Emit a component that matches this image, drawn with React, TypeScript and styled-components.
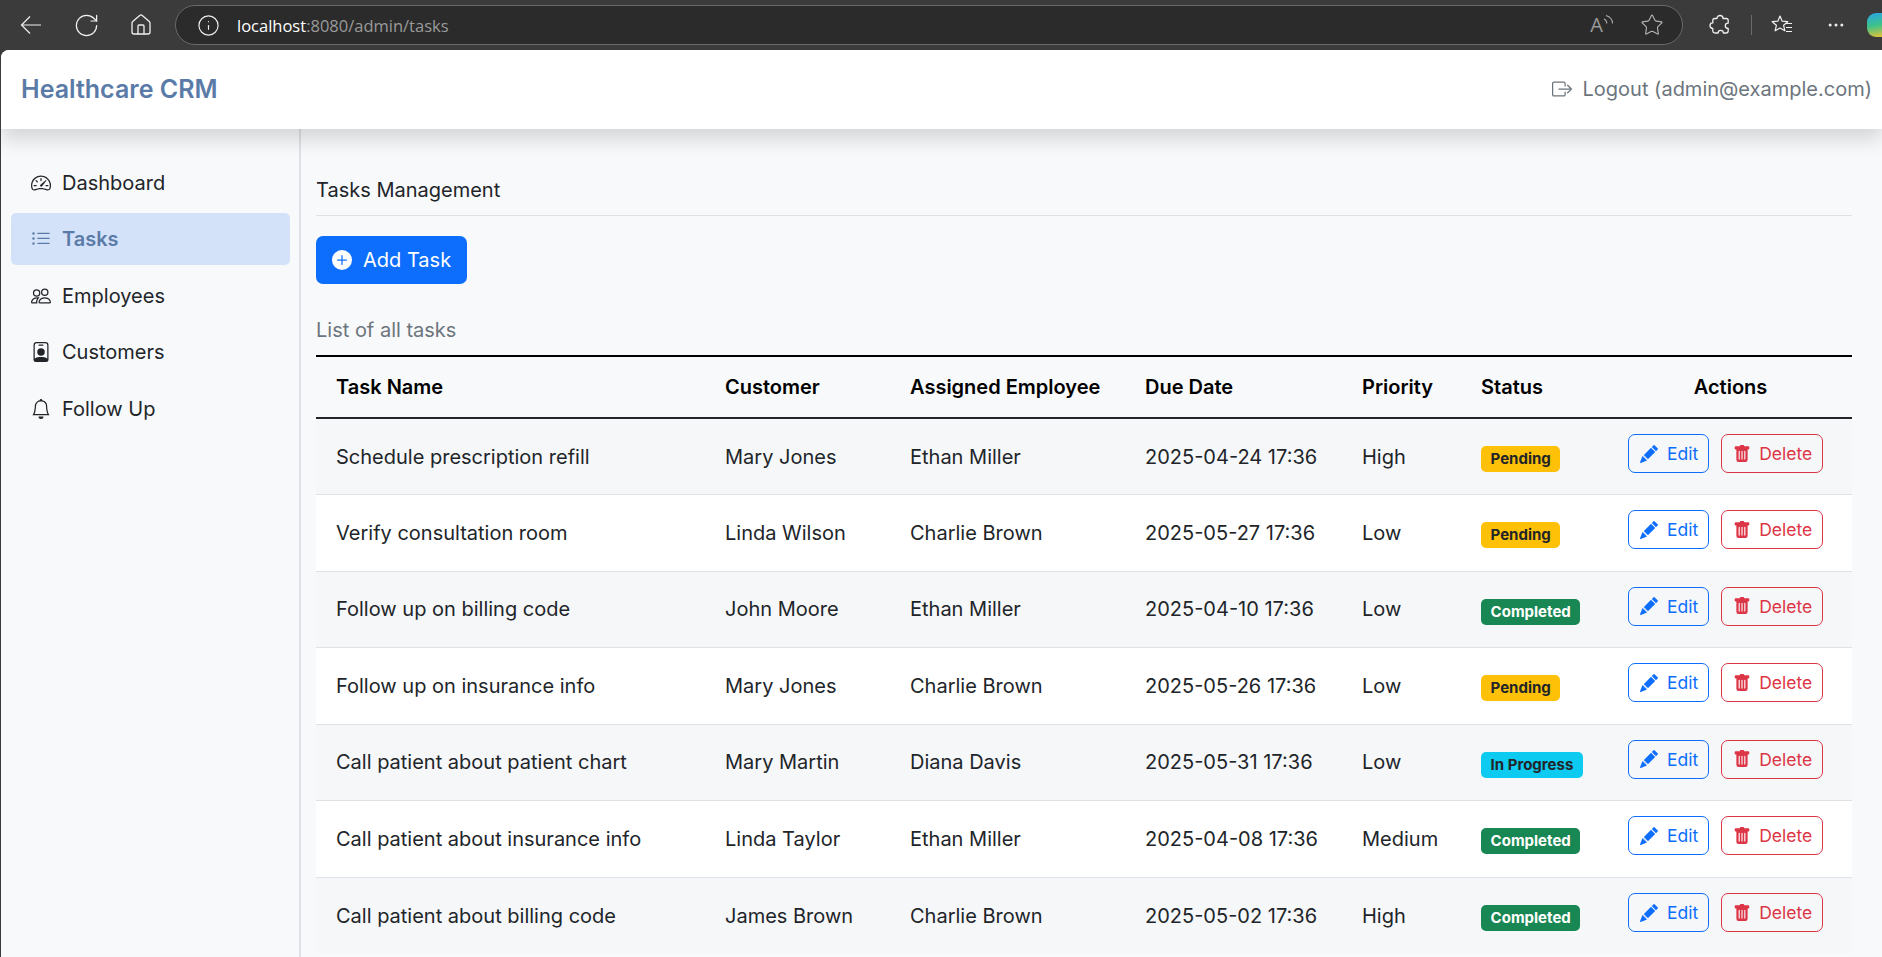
import styled, { createGlobalStyle } from 'styled-components';
import { RotateCw, House, Info, Star, MoreHorizontal } from 'lucide-react';
import {
  BsSpeedometer2,
  BsListUl,
  BsPeople,
  BsPersonBadge,
  BsBell,
  BsBoxArrowRight,
  BsPlusCircleFill,
  BsPencilFill,
  BsTrashFill,
} from 'react-icons/bs';

const navItems = [
  { label: 'Dashboard', icon: <BsSpeedometer2 /> },
  { label: 'Tasks', icon: <BsListUl />, active: true },
  { label: 'Employees', icon: <BsPeople /> },
  { label: 'Customers', icon: <BsPersonBadge /> },
  { label: 'Follow Up', icon: <BsBell /> },
];

type Status = 'Pending' | 'Completed' | 'In Progress';

const tasks: { name: string; customer: string; employee: string; due: string; priority: string; status: Status }[] = [
  { name: 'Schedule prescription refill', customer: 'Mary Jones', employee: 'Ethan Miller', due: '2025-04-24 17:36', priority: 'High', status: 'Pending' },
  { name: 'Verify consultation room', customer: 'Linda Wilson', employee: 'Charlie Brown', due: '2025-05-27 17:36', priority: 'Low', status: 'Pending' },
  { name: 'Follow up on billing code', customer: 'John Moore', employee: 'Ethan Miller', due: '2025-04-10 17:36', priority: 'Low', status: 'Completed' },
  { name: 'Follow up on insurance info', customer: 'Mary Jones', employee: 'Charlie Brown', due: '2025-05-26 17:36', priority: 'Low', status: 'Pending' },
  { name: 'Call patient about patient chart', customer: 'Mary Martin', employee: 'Diana Davis', due: '2025-05-31 17:36', priority: 'Low', status: 'In Progress' },
  { name: 'Call patient about insurance info', customer: 'Linda Taylor', employee: 'Ethan Miller', due: '2025-04-08 17:36', priority: 'Medium', status: 'Completed' },
  { name: 'Call patient about billing code', customer: 'James Brown', employee: 'Charlie Brown', due: '2025-05-02 17:36', priority: 'High', status: 'Completed' },
];

const columns = [
  { title: 'Task Name', width: 389 },
  { title: 'Customer', width: 185 },
  { title: 'Assigned Employee', width: 235 },
  { title: 'Due Date', width: 217 },
  { title: 'Priority', width: 119 },
  { title: 'Status', width: 148 },
  { title: 'Actions', width: 243, center: true },
];

function App() {
  return (
    <Page>
      <GlobalStyle />
      <BrowserBar>
        <ChromeButton>
          <svg width="22" height="20" viewBox="0 0 22 20" fill="none" stroke="currentColor" strokeWidth="1.2">
            <path d="M21 10H1.5M10 1.5 1.5 10l8.5 8.5" />
          </svg>
        </ChromeButton>
        <ChromeButton><RotateCw size={27} strokeWidth={1.1} /></ChromeButton>
        <ChromeButton><House size={24} strokeWidth={1.3} /></ChromeButton>
        <AddressBar>
          <Info size={23} strokeWidth={1.2} color="#f0f0f0" />
          <Url><b>localhost</b>:8080/admin/tasks</Url>
          <ReadAloud>
            A
            <svg width="12" height="14" viewBox="0 0 12 14" fill="none" stroke="#aaaaaa" strokeWidth="1.1">
              <path d="M1 5c1.8.8 2.800 2.400 2.800 4.500" />
              <path d="M3 1.500c4 1.200 6.500 4 6.500 8" />
            </svg>
          </ReadAloud>
          <Star size={24} strokeWidth={1.1} color="#b5b5b5" />
        </AddressBar>
        <ToolIcons>
          <svg width="22" height="22" viewBox="0 0 22 22" fill="none" stroke="#f0f0f0" strokeWidth="1.3" strokeLinejoin="round">
            <path d="M8 4.500C8 2.500 9.500 1.500 11 1.500c2 0 3 1.300 3 3h3.200c1.300 0 2 .8 2 2v2.700c-1.700 0-2.900 1.100-2.900 2.600s1.200 2.700 2.900 2.700v2.200c0 1.500-.8 2.300-2.200 2.300h-2.600c0-1.600-1.200-2.700-2.700-2.700s-2.600 1.100-2.600 2.700H6c-1.400 0-2.200-.9-2.200-2.200v-2.400c-1.600 0-2.800-1-2.800-2.800 0-1.600 1.200-2.700 2.800-2.700V6.500c0-1.200.8-2 2-2z" />
          </svg>
          <Separator />
          <svg width="22" height="22" viewBox="0 0 22 22" fill="none" stroke="#f0f0f0" strokeWidth="1.2" strokeLinejoin="round">
            <path d="M9 2l2.200 5.200 5.600.5-4.200 3.600 1.300 5.500L9 14l-4.900 2.800 1.300-5.500L1.200 7.700l5.600-.5z" />
            <path d="M14.500 9.500H21M15 13.500h6M15 17.500h6" />
          </svg>
          <MoreHorizontal size={20} strokeWidth={1.6} />
        </ToolIcons>
        <CopilotMark />
      </BrowserBar>
      <Window>
        <Navbar>
          <Brand>Healthcare CRM</Brand>
          <LogoutLink><BsBoxArrowRight />Logout (admin@example.com)</LogoutLink>
        </Navbar>
        <Body>
          <Sidebar>
            {navItems.map((item) => (
              <NavItem key={item.label} $active={item.active}>
                {item.icon}
                {item.label}
              </NavItem>
            ))}
          </Sidebar>
          <Main>
            <Heading>Tasks Management</Heading>
            <AddButton><BsPlusCircleFill />Add Task</AddButton>
            <Caption>List of all tasks</Caption>
            <TaskTable>
              <colgroup>
                {columns.map((col) => <Col key={col.title} $width={col.width} />)}
              </colgroup>
              <thead>
                <tr>
                  {columns.map((col) => <Th key={col.title} $center={col.center}>{col.title}</Th>)}
                </tr>
              </thead>
              <tbody>
                {tasks.map((task) => (
                  <Row key={task.name}>
                    <Td>{task.name}</Td>
                    <Td>{task.customer}</Td>
                    <Td>{task.employee}</Td>
                    <Td>{task.due}</Td>
                    <Td>{task.priority}</Td>
                    <StatusCell><Badge $status={task.status}>{task.status}</Badge></StatusCell>
                    <ActionCell>
                      <Actions>
                        <OutlineButton $color="#0d6efd" $gap={9}><BsPencilFill />Edit</OutlineButton>
                        <OutlineButton $color="#dc3545" $gap={8}><BsTrashFill />Delete</OutlineButton>
                      </Actions>
                    </ActionCell>
                  </Row>
                ))}
              </tbody>
            </TaskTable>
          </Main>
        </Body>
      </Window>
    </Page>
  );
}

export default App;

const GlobalStyle = createGlobalStyle`
  html, body {
    margin: 0;
    height: 100%;
    overflow: hidden;
    background: #3b3b3b;
  }
  * {
    box-sizing: border-box;
  }
`;

const badgeColors: Record<Status, { bg: string; fg: string }> = {
  Pending: { bg: '#ffc107', fg: '#212529' },
  Completed: { bg: '#198754', fg: '#ffffff' },
  'In Progress': { bg: '#0dcaf0', fg: '#212529' },
};

const Page = styled.div`
  display: flex;
  flex-direction: column;
  height: 957px;
  overflow: hidden;
  font-family: Inter, 'Liberation Sans', sans-serif;
  font-size: 20px;
  color: #212529;
`;

const BrowserBar = styled.header`
  display: flex;
  flex: none;
  align-items: center;
  height: 50px;
  padding-left: 19px;
  background: #3b3b3b;
  color: #f0f0f0;
`;

const ChromeButton = styled.span`
  display: flex;
  flex: none;
  justify-content: center;
  width: 24px;
  margin-right: 31px;

  svg {
    flex: none;
  }
`;

const AddressBar = styled.div`
  display: flex;
  flex: none;
  align-items: center;
  width: 1508px;
  height: 40px;
  margin-left: -9px;
  padding: 0 18px 0 21px;
  border: 1px solid #6a6a6a;
  border-radius: 20px;
  background: #2b2b2b;
`;

const Url = styled.span`
  flex: 1;
  margin-left: 17px;
  font-family: 'Open Sans', 'Liberation Sans', sans-serif;
  font-size: 16.5px;
  color: #9a9a9a;

  b {
    font-weight: 400;
    color: #ffffff;
  }
`;

const ReadAloud = styled.span`
  display: flex;
  align-items: flex-start;
  margin-right: 25px;
  font-family: 'Open Sans', 'Liberation Sans', sans-serif;
  font-size: 20px;
  line-height: 24px;
  color: #9a9a9a;

  svg {
    margin-top: 1px;
  }
`;

const ToolIcons = styled.div`
  display: flex;
  flex: none;
  align-items: center;
  margin-left: 26px;

  > svg:nth-child(3) {
    margin-left: 19px;
  }

  > svg:nth-child(4) {
    margin-left: 33px;
  }
`;

const Separator = styled.i`
  display: block;
  width: 1px;
  height: 20px;
  margin-left: 20px;
  background: #6a6a6a;
`;

const CopilotMark = styled.i`
  display: block;
  flex: none;
  width: 20px;
  height: 24px;
  margin-left: 21px;
  border-radius: 9px 0 0 9px;
  background: linear-gradient(170deg, #2aa4e8 0%, #3bc28a 50%, #f2c230 100%);
`;

const Window = styled.div`
  display: flex;
  flex: 1;
  flex-direction: column;
  min-height: 0;
  margin-left: 1px;
  overflow: hidden;
  border-radius: 8px 0 0 0;
  background: #f8f9fa;
`;

const Navbar = styled.nav`
  position: relative;
  z-index: 2;
  display: flex;
  flex: none;
  align-items: center;
  justify-content: space-between;
  height: 79px;
  padding: 0 10px 2px 20px;
  background: #ffffff;
  box-shadow: 0 9.6px 19.2px rgba(0, 0, 0, 0.15);
`;

const Brand = styled.span`
  font-size: 25px;
  font-weight: 600;
  color: #5a7ba8;
`;

const LogoutLink = styled.span`
  display: flex;
  align-items: center;
  gap: 11px;
  color: #6c757d;

  svg {
    width: 20px;
    height: 20px;
  }
`;

const Body = styled.div`
  display: flex;
  flex: 1;
  min-height: 0;
`;

const Sidebar = styled.aside`
  display: flex;
  flex: none;
  flex-direction: column;
  gap: 4.5px;
  width: 300px;
  padding: 27.6px 9px 0 10px;
  border-right: 2px solid #dee2e6;
`;

const NavItem = styled.a<{ $active?: boolean }>`
  display: flex;
  align-items: center;
  gap: 11px;
  height: 52px;
  padding-left: 20px;
  border-radius: 5px;
  background: ${(p) => (p.$active ? '#d4e2f9' : 'transparent')};
  color: ${(p) => (p.$active ? '#5a7ba8' : '#212529')};
  font-weight: ${(p) => (p.$active ? 600 : 400)};

  svg {
    flex: none;
    width: 20px;
    height: 20px;
  }
`;

const Main = styled.main`
  flex: 1;
  min-width: 0;
  padding: 49px 30px 0 15px;
`;

const Heading = styled.h1`
  margin: 0 0 20px;
  padding-bottom: 13px;
  border-bottom: 1px solid #dee2e6;
  font-size: 20px;
  font-weight: 400;
  line-height: 24px;
`;

const AddButton = styled.button`
  display: flex;
  align-items: center;
  gap: 11px;
  height: 48px;
  padding: 0 16px;
  border: 0;
  border-radius: 7px;
  background: #0d6efd;
  color: #ffffff;
  font: inherit;

  svg {
    width: 20px;
    height: 20px;
  }
`;

const Caption = styled.p`
  margin: 0;
  padding-top: 33px;
  height: 71px;
  color: #6c757d;
  line-height: 26px;
`;

const TaskTable = styled.table`
  width: 1536px;
  table-layout: fixed;
  border-collapse: collapse;
`;

const Col = styled.col<{ $width: number }>`
  width: ${(p) => p.$width}px;
`;

const Th = styled.th<{ $center?: boolean }>`
  height: 62px;
  padding: 0 20px;
  border-top: 2px solid #000000;
  border-bottom: 2px solid #212529;
  color: #000000;
  font-weight: 600;
  text-align: ${(p) => (p.$center ? 'center' : 'left')};
`;

const Row = styled.tr`
  background: #ffffff;

  &:nth-child(odd) {
    background: #f6f7f9;
  }

  &:last-child td {
    border-bottom: 0;
  }
`;

const Td = styled.td`
  height: 76.5px;
  padding: 0 20px;
  border-bottom: 1px solid #dee2e6;
  vertical-align: middle;
  white-space: nowrap;
`;

const StatusCell = styled(Td)`
  padding-top: 4px;
`;

const ActionCell = styled(Td)`
  padding: 0 0 6px 19px;
`;

const Badge = styled.span<{ $status: Status }>`
  display: inline-block;
  padding: 5px 9.6px;
  border-radius: 5px;
  background: ${(p) => badgeColors[p.$status].bg};
  color: ${(p) => badgeColors[p.$status].fg};
  font-size: 15px;
  font-weight: 700;
  line-height: 16px;
`;

const Actions = styled.div`
  display: flex;
  gap: 12px;
`;

const OutlineButton = styled.button<{ $color: string; $gap: number }>`
  display: flex;
  align-items: center;
  gap: ${(p) => p.$gap}px;
  height: 39px;
  padding: 0 10px 0 11px;
  border: 1px solid ${(p) => p.$color};
  border-radius: 7px;
  background: transparent;
  color: ${(p) => p.$color};
  font-family: inherit;
  font-size: 17.5px;

  svg {
    width: 18px;
    height: 18px;
  }
`;
